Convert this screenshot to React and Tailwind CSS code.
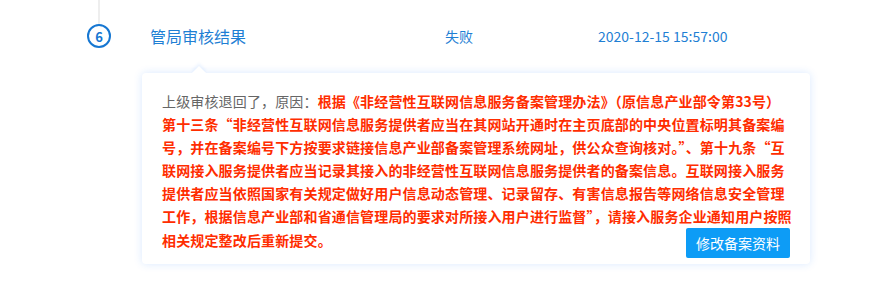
import React from "react";

const lines = [
  "第十三条“非经营性互联网信息服务提供者应当在其网站开通时在主页底部的中央位置标明其备案编",
  "号，并在备案编号下方按要求链接信息产业部备案管理系统网址，供公众查询核对。”、第十九条“互",
  "联网接入服务提供者应当记录其接入的非经营性互联网信息服务提供者的备案信息。互联网接入服务",
  "提供者应当依照国家有关规定做好用户信息动态管理、记录留存、有害信息报告等网络信息安全管理",
  "工作，根据信息产业部和省通信管理局的要求对所接入用户进行监督”，请接入服务企业通知用户按照",
];

export default function App() {
  return (
    <div
      className="h-[283px] w-[884px] bg-white"
      style={{ fontFamily: '"Noto Sans CJK SC", "Noto Sans", sans-serif' }}
    >
      <div className="flex h-[48px] items-end pl-[87px]">
        <div className="flex w-[24px] flex-col items-center">
          <div className="h-[24px] w-[2px] bg-[#eeeeee]" />
          <div className="flex h-[24px] w-[24px] items-center justify-center rounded-full border-2 border-[#1677d2] text-[13px] font-bold leading-none text-[#1677d2]">
            6
          </div>
        </div>
        <div className="flex h-[24px] items-center text-[#1f7fd4]">
          <div className="ml-[39px] w-[295px] text-[16px]">管局审核结果</div>
          <div className="w-[153px] text-[14px]">失败</div>
          <div className="text-[14px]">2020-12-15 15:57:00</div>
        </div>
      </div>

      <div className="relative ml-[142px] mt-[25px] w-[668px] rounded-[4px] bg-white pb-[6px] pl-[20px] pr-[20px] pt-[17px] shadow-[0_0_8px_rgba(24,120,255,0.16)]">
        <div className="absolute left-[52px] top-[-5px] h-[10px] w-[10px] rotate-45 bg-white shadow-[-2px_-2px_3px_rgba(24,120,255,0.08)]" />
        <div className="relative whitespace-nowrap text-[14px] leading-[23px] tracking-[0.15px]">
          <div>
            <span className="text-[#666666]">上级审核退回了，原因：</span>
            <span className="font-bold text-[#ff2d00]">
              根据《非经营性互联网信息服务备案管理办法》（原信息产业部令第33号）
            </span>
          </div>
          {lines.map((line) => (
            <div key={line} className="font-bold text-[#ff2d00]">
              {line}
            </div>
          ))}
          <div className="flex items-start justify-between">
            <div className="pt-[1px] font-bold text-[#ff2d00]">相关规定整改后重新提交。</div>
            <button
              type="button"
              className="h-[30px] w-[104px] rounded-[2px] bg-[#0d9cf6] text-[14px] tracking-normal text-white"
            >
              修改备案资料
            </button>
          </div>
        </div>
      </div>
    </div>
  );
}
